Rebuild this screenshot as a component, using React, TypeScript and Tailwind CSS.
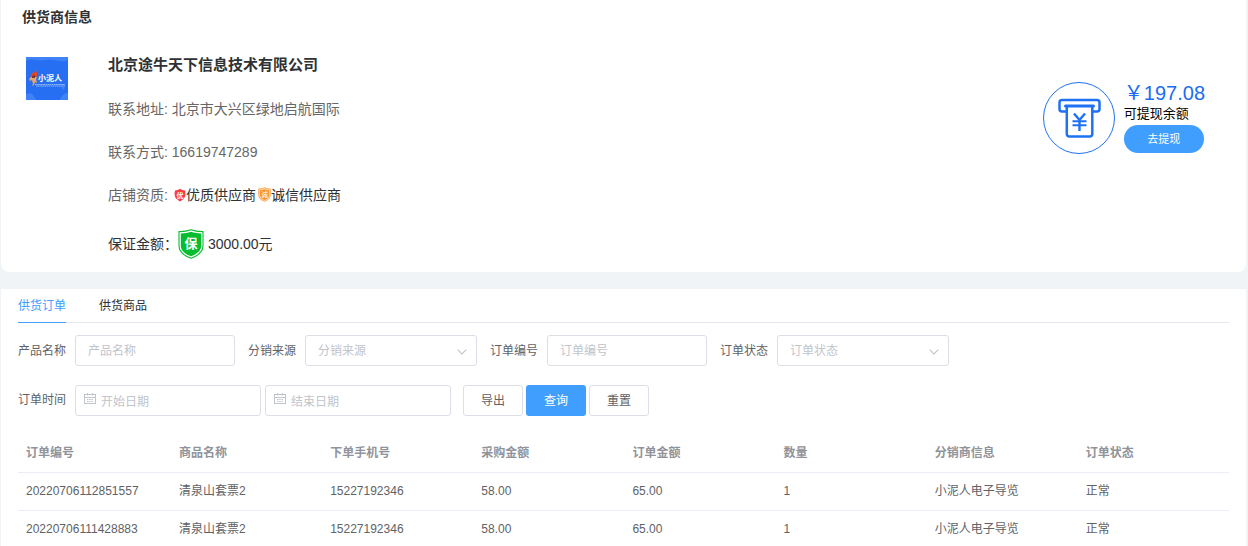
import React, { useState } from "react";

interface Order {
  id: string;
  product: string;
  phone: string;
  purchase: string;
  amount: string;
  count: number;
  distributor: string;
  status: string;
}

const orders: Order[] = [
  {
    id: "20220706112851557",
    product: "清泉山套票2",
    phone: "15227192346",
    purchase: "58.00",
    amount: "65.00",
    count: 1,
    distributor: "小泥人电子导览",
    status: "正常",
  },
  {
    id: "20220706111428883",
    product: "清泉山套票2",
    phone: "15227192346",
    purchase: "58.00",
    amount: "65.00",
    count: 1,
    distributor: "小泥人电子导览",
    status: "正常",
  },
];

const columns = ["订单编号", "商品名称", "下单手机号", "采购金额", "订单金额", "数量", "分销商信息", "订单状态"];

const tabs = ["供货订单", "供货商品"];

const fieldClass =
  "h-[31px] rounded-[3px] border border-[#dcdfe6] bg-white text-xs text-[#606266] outline-none placeholder:text-[#c0c4cc] placeholder:opacity-100 focus:border-[#409eff]";

function SupplierLogo() {
  return (
    <svg viewBox="0 0 42 43" className="mt-[14px] h-[43px] w-[42px] shrink-0" role="img" aria-label="小泥人">
      <rect width="42" height="43" fill="#276ff2" />
      <path d="M0 0h42v3c-5 2-9 1-14 0S16 4 10 3 3 3 0 4z" fill="#3f82f6" />
      <path d="M0 37c5-2 8 1 10 6H0zM42 36c-4 0-7 3-8 7h8z" fill="#3f82f6" />
      <circle cx="37" cy="31" r="1.500" fill="#3f82f6" />
      <path d="M10 13c-1 2-3 3-5 4-1 2 0 3 1 4h4c2-2 1-5 0-8z" fill="#e8431f" />
      <path d="M5 20c-2 1-2 3-1 4l2-1 1 4-1 2 2-1 1-3 2 1-1-4 1-2z" fill="#e9a56b" />
      <path d="M6 19l3-1v3H6z" fill="#7a3a2a" />
      <text x="12" y="24" fontSize="8" fontWeight="bold" fill="#ffffff">
        小泥人
      </text>
      <path d="M9 27.500h30M10 29h29" stroke="#9fc0fb" strokeWidth="0.9" strokeDasharray="1.600 0.500" />
    </svg>
  );
}

function WithdrawIcon() {
  return (
    <svg viewBox="0 0 72 72" className="size-[72px]" fill="none" stroke="#1f71f3" aria-hidden="true">
      <circle cx="36" cy="36" r="35.500" strokeWidth="1" />
      <rect x="16.500" y="18" width="40" height="11.500" rx="2.500" strokeWidth="2.500" />
      <path
        d="M23.800 24v28a2.500 2.500 0 0 0 2.500 2.500h20.500a2.500 2.500 0 0 0 2.500-2.500V24"
        fill="#ffffff"
        strokeWidth="2.500"
      />
      <path d="M22.500 24h28" strokeWidth="3" strokeLinecap="round" />
      <path d="M31 31.500l5.500 6.500L42 31.500M36.500 38v11" strokeWidth="2.400" />
      <path d="M29.500 39.200h14M29.500 43.200h14" strokeWidth="2" />
    </svg>
  );
}

function QualityBadge() {
  return (
    <svg viewBox="0 0 12 14" className="h-[14px] w-3" aria-hidden="true">
      <path
        d="M6 .8C7.500 1.900 9.300 2.200 11 2.600c.5 1.500.5 3.200.3 5C10.800 10.400 8.600 12.400 6 13.400 3.400 12.400 1.200 10.400.7 7.600.5 5.800.5 4.100 1 2.600 2.700 2.200 4.500 1.900 6 .8z"
        fill="#fb3b45"
      />
      <text x="6" y="9.800" fontSize="7" fontWeight="bold" textAnchor="middle" fill="#ffffff">
        优
      </text>
    </svg>
  );
}

function HonestBadge() {
  return (
    <svg viewBox="0 0 13 15" className="h-[15px] w-[13px]" aria-hidden="true">
      <path
        d="M6.500.7C8 1.500 10 1.900 12.300 1.900v6.100c0 3.200-2.600 5.300-5.800 6.300C3.300 13.300.7 11.200.7 8V1.900c2.300 0 4.300-.4 5.800-1.200z"
        fill="#ffd9a8"
        stroke="#fb9a3c"
        strokeWidth="0.8"
      />
      <path
        d="M6.500 2.300c1.300.6 2.800 1 4.500 1V8c0 2.400-2 4.200-4.500 5C4 12.200 2 10.400 2 8V3.300c1.700 0 3.200-.4 4.500-1z"
        fill="#fb942f"
      />
      <text x="6.500" y="10" fontSize="7" textAnchor="middle" fill="#ffffff">
        诚
      </text>
    </svg>
  );
}

function GuaranteeBadge() {
  return (
    <svg viewBox="0 0 26 30" className="h-[30px] w-[26px]" aria-hidden="true">
      <path
        d="M13 .8c3.500 1.300 7.500 1.900 12 1.800v13.900c0 6.500-5 10.300-12 12.700C6 26.800 1 23 1 16.500V2.600C5.500 2.700 9.500 2.100 13 .8z"
        fill="#ffffff"
        stroke="#06bd2f"
        strokeWidth="1.100"
      />
      <path
        d="M13 2.800c3.200 1.200 6.500 1.700 10.200 1.700v12c0 5.300-4.200 8.500-10.200 10.700C7 25 2.800 21.800 2.800 16.500v-12c3.700 0 7-.5 10.200-1.700z"
        fill="#06bd2f"
      />
      <text x="13" y="19" fontSize="13" fontWeight="bold" textAnchor="middle" fill="#ffffff">
        保
      </text>
    </svg>
  );
}

function CalendarIcon() {
  return (
    <svg
      viewBox="0 0 12 12"
      className="pointer-events-none absolute top-[8px] left-[9px] size-3"
      fill="none"
      stroke="#c0c4cc"
      aria-hidden="true"
    >
      <rect x="0.500" y="1.500" width="11" height="9" />
      <path d="M.5 4.500h11M3.500 0v2.500M8.500 0v2.500" />
      <path d="M3 6.500h6M3 8.500h6" strokeDasharray="1.500 0.700" />
    </svg>
  );
}

function DateField({ label }: { label: string }) {
  return (
    <div className="relative">
      <CalendarIcon />
      <input type="text" aria-label={label} placeholder={label} className={`${fieldClass} w-[186px] pt-[2px] pl-[25px]`} />
    </div>
  );
}

function TextField({ id, label }: { id: string; label: string }) {
  return (
    <div className="flex items-center gap-[9px]">
      <label htmlFor={id}>{label}</label>
      <input id={id} type="text" placeholder={label} className={`${fieldClass} w-40 px-3`} />
    </div>
  );
}

function SelectField({ id, label, options }: { id: string; label: string; options: string[] }) {
  const [value, setValue] = useState("");

  return (
    <div className="flex items-center gap-[9px]">
      <label htmlFor={id}>{label}</label>
      <div className="relative">
        <select
          id={id}
          value={value}
          onChange={(e) => setValue(e.target.value)}
          className={`${fieldClass} w-[172px] appearance-none px-3 ${value === "" ? "text-[#c0c4cc]" : ""}`}
        >
          <option value="" hidden>
            {label}
          </option>
          {options.map((option) => (
            <option key={option}>{option}</option>
          ))}
        </select>
        <svg
          viewBox="0 0 10 6"
          className="pointer-events-none absolute top-[14px] right-[10px] h-[6px] w-[10px]"
          fill="none"
          stroke="#c0c4cc"
          aria-hidden="true"
        >
          <path d="M.7.7L5 5 9.300.7" strokeWidth="1.100" />
        </svg>
      </div>
    </div>
  );
}

function SupplierCard() {
  return (
    <section className="rounded-b-lg bg-white">
      <h2 className="pl-[21px] text-sm leading-[34px] font-bold text-[#303133]">供货商信息</h2>
      <div className="flex items-start pt-[9px] pr-[41px] pl-[25px]">
        <SupplierLogo />
        <div className="ml-10 flex-1 text-sm text-[#666666]">
          <h3 className="mb-[2px] text-[15px] leading-[43px] font-bold text-[#303133]">北京途牛天下信息技术有限公司</h3>
          <p className="leading-[43px]">联系地址: 北京市大兴区绿地启航国际</p>
          <p className="leading-[43px]">联系方式: 16619747289</p>
          <div className="flex h-[41px] items-center">
            <span className="mr-[6px]">店铺资质:</span>
            <span className="flex items-center text-[#303133]">
              <QualityBadge />
              优质供应商
            </span>
            <span className="ml-[2px] flex items-center text-[#303133]">
              <HonestBadge />
              诚信供应商
            </span>
          </div>
          <div className="flex h-[57px] items-center text-[#303133]">
            <span>保证金额：</span>
            <GuaranteeBadge />
            <span className="ml-1">3000.00元</span>
          </div>
        </div>
        <div className="mt-[39px] flex gap-[9px]">
          <WithdrawIcon />
          <div>
            <p className="text-xl leading-[22px] text-[#1b6cf0]">￥197.08</p>
            <p className="text-[13px] leading-5 text-black">可提现余额</p>
            <button
              type="button"
              className="mt-px block h-7 w-20 cursor-pointer rounded-full bg-[#409eff] text-[11px] text-white hover:bg-[#66b1ff]"
            >
              去提现
            </button>
          </div>
        </div>
      </div>
    </section>
  );
}

function OrderFilters() {
  return (
    <form className="pt-3 text-[#606266]" onSubmit={(e) => e.preventDefault()}>
      <div className="flex flex-wrap items-center gap-[13px]">
        <TextField id="product" label="产品名称" />
        <SelectField id="source" label="分销来源" options={["小泥人电子导览"]} />
        <TextField id="order-no" label="订单编号" />
        <SelectField id="status" label="订单状态" options={["正常", "已退款"]} />
      </div>
      <div className="mt-[19px] flex flex-wrap items-center gap-3">
        <fieldset className="flex items-center gap-1">
          <legend className="float-left mr-[5px] leading-[31px]">订单时间</legend>
          <DateField label="开始日期" />
          <DateField label="结束日期" />
        </fieldset>
        <div className="flex gap-[3px]">
          <button type="button" className="h-[31px] w-[60px] cursor-pointer rounded-[3px] border border-[#dcdfe6]">
            导出
          </button>
          <button type="submit" className="h-[31px] w-[60px] cursor-pointer rounded-[3px] bg-[#409eff] text-white">
            查询
          </button>
          <button type="reset" className="h-[31px] w-[60px] cursor-pointer rounded-[3px] border border-[#dcdfe6]">
            重置
          </button>
        </div>
      </div>
    </form>
  );
}

function OrderTable() {
  return (
    <table className="mt-[15px] w-full table-fixed text-left text-[#606266]">
      <thead>
        <tr className="h-[41px] border-b border-[#ebeef5] text-[#909399]">
          {columns.map((column) => (
            <th key={column} className="px-2 pt-1 font-bold first:w-[153px]">
              {column}
            </th>
          ))}
        </tr>
      </thead>
      <tbody>
        {orders.map((order) => (
          <tr key={order.id} className="h-[38px] border-b border-[#ebeef5] hover:bg-[#f5f7fa]">
            <td className="px-2">{order.id}</td>
            <td className="px-2">{order.product}</td>
            <td className="px-2">{order.phone}</td>
            <td className="px-2">{order.purchase}</td>
            <td className="px-2">{order.amount}</td>
            <td className="px-2">{order.count}</td>
            <td className="px-2">{order.distributor}</td>
            <td className="px-2">{order.status}</td>
          </tr>
        ))}
      </tbody>
    </table>
  );
}

export default function App() {
  const [activeTab, setActiveTab] = useState(tabs[0]);

  return (
    <main className="min-h-screen bg-[#f0f4f7] pr-[2px] pl-px font-['Liberation_Sans','Noto_Sans_CJK_SC',sans-serif]">
      <SupplierCard />
      <section className="mt-[17px] bg-white px-[17px] text-xs">
        <div role="tablist" className="flex gap-[33px] border-b border-[#e4e7ed]">
          {tabs.map((tab) => (
            <button
              key={tab}
              type="button"
              role="tab"
              aria-selected={activeTab === tab}
              onClick={() => setActiveTab(tab)}
              className={`-mb-px h-[34px] cursor-pointer border-b ${
                activeTab === tab ? "border-[#409eff] text-[#409eff]" : "border-transparent text-[#303133]"
              }`}
            >
              {tab}
            </button>
          ))}
        </div>
        <OrderFilters />
        <OrderTable />
      </section>
    </main>
  );
}
